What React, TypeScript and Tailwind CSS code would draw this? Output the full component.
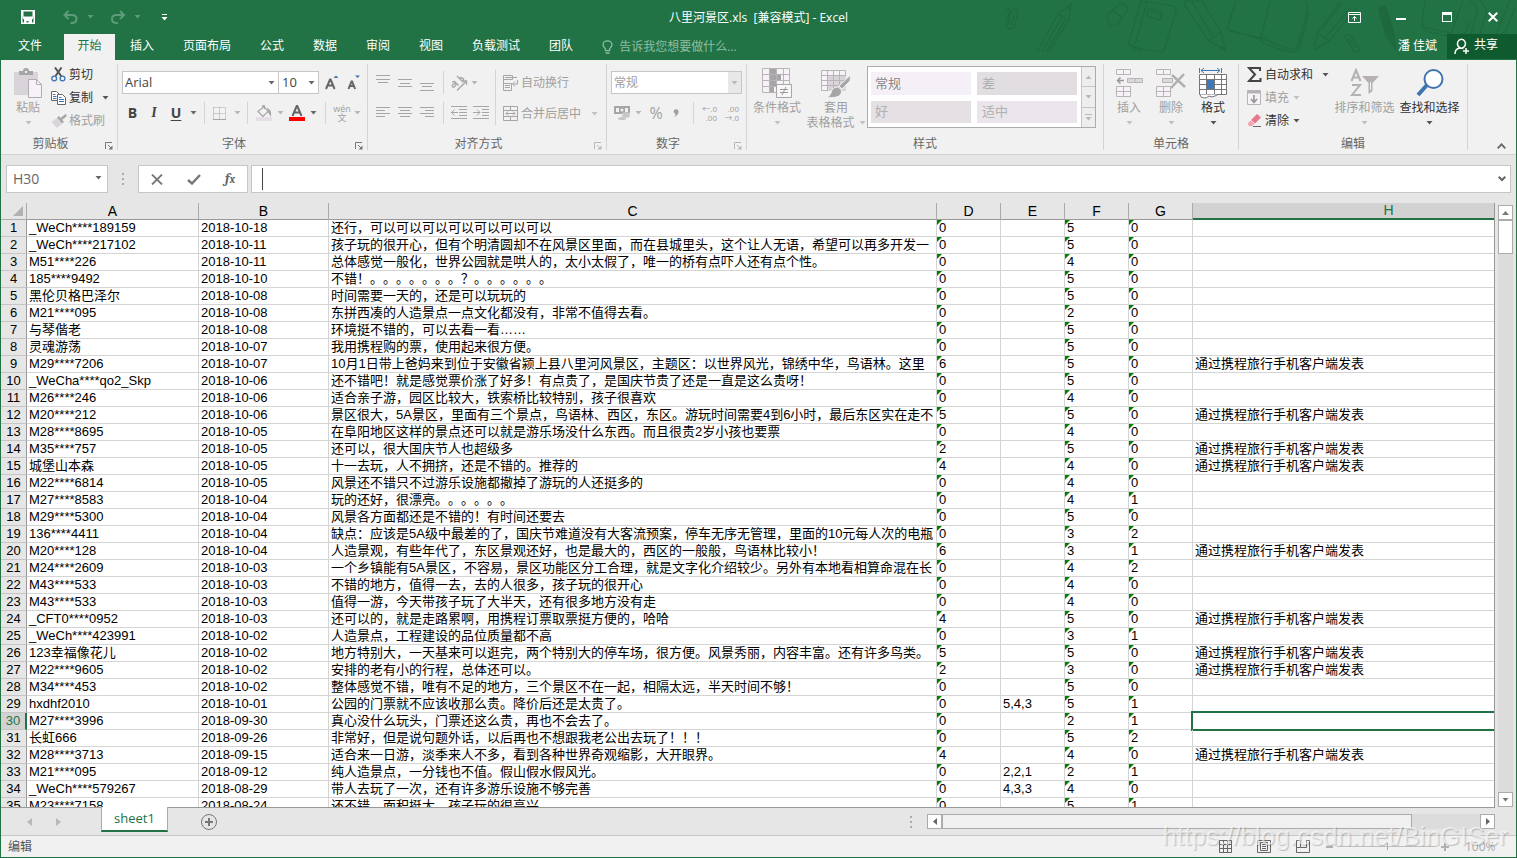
import type { ReactNode } from "react";
import clsx from "clsx";

const FROM_APP = "通过携程旅行手机客户端发表";

// user, date, comment, D, E, F, G, H
const rows: string[][] = [
  ["_WeCh****189159", "2018-10-18", "还行，可以可以可以可以可以可以可以", "0", "", "5", "0", ""],
  ["_WeCh****217102", "2018-10-11", "孩子玩的很开心，但有个明清圆却不在风景区里面，而在县城里头，这个让人无语，希望可以再多开发一", "0", "", "5", "0", ""],
  ["M51****226", "2018-10-11", "总体感觉一般化，世界公园就是哄人的，太小太假了，唯一的桥有点吓人还有点个性。", "0", "", "4", "0", ""],
  ["185****9492", "2018-10-10", "不错！。。。。。。。？。。。。。。", "0", "", "5", "0", ""],
  ["黑伦贝格巴泽尔", "2018-10-08", "时间需要一天的，还是可以玩玩的", "0", "", "5", "0", ""],
  ["M21****095", "2018-10-08", "东拼西凑的人造景点一点文化都没有，非常不值得去看。", "0", "", "2", "0", ""],
  ["与琴偕老", "2018-10-08", "环境挺不错的，可以去看一看……", "0", "", "5", "0", ""],
  ["灵魂游荡", "2018-10-07", "我用携程购的票，使用起来很方便。", "0", "", "5", "0", ""],
  ["M29****7206", "2018-10-07", "10月1日带上爸妈来到位于安徽省颍上县八里河风景区，主题区：以世界风光，锦绣中华，鸟语林。这里", "6", "", "5", "0", FROM_APP],
  ["_WeCha****qo2_Skp", "2018-10-06", "还不错吧！就是感觉票价涨了好多！有点贵了，是国庆节贵了还是一直是这么贵呀！", "0", "", "5", "0", ""],
  ["M26****246", "2018-10-06", "适合亲子游，园区比较大，铁索桥比较特别，孩子很喜欢", "0", "", "4", "0", ""],
  ["M20****212", "2018-10-06", "景区很大，5A景区，里面有三个景点，鸟语林、西区，东区。游玩时间需要4到6小时，最后东区实在走不", "5", "", "5", "0", FROM_APP],
  ["M28****8695", "2018-10-05", "在阜阳地区这样的景点还可以就是游乐场没什么东西。而且很贵2岁小孩也要票", "0", "", "4", "0", ""],
  ["M35****757", "2018-10-05", "还可以，很大国庆节人也超级多", "2", "", "5", "0", FROM_APP],
  ["城堡山本森", "2018-10-05", "十一去玩，人不拥挤，还是不错的。推荐的", "4", "", "4", "0", FROM_APP],
  ["M22****6814", "2018-10-05", "风景还不错只不过游乐设施都撤掉了游玩的人还挺多的", "0", "", "4", "0", ""],
  ["M27****8583", "2018-10-04", "玩的还好，很漂亮。。。。。。", "0", "", "4", "1", ""],
  ["M29****5300", "2018-10-04", "风景各方面都还是不错的！有时间还要去", "0", "", "5", "0", ""],
  ["136****4411", "2018-10-04", "缺点：应该是5A级中最差的了，国庆节难道没有大客流预案，停车无序无管理，里面的10元每人次的电瓶", "0", "", "3", "2", ""],
  ["M20****128", "2018-10-04", "人造景观，有些年代了，东区景观还好，也是最大的，西区的一般般，鸟语林比较小！", "6", "", "3", "1", FROM_APP],
  ["M24****2609", "2018-10-03", "一个乡镇能有5A景区，不容易，景区功能区分工合理，就是文字化介绍较少。另外有本地看相算命混在长", "0", "", "4", "2", ""],
  ["M43****533", "2018-10-03", "不错的地方，值得一去，去的人很多，孩子玩的很开心", "0", "", "4", "0", ""],
  ["M43****533", "2018-10-03", "值得一游，今天带孩子玩了大半天，还有很多地方没有走", "0", "", "4", "0", ""],
  ["_CFT0****0952", "2018-10-03", "还可以的，就是走路累啊，用携程订票取票挺方便的，哈哈", "4", "", "5", "0", FROM_APP],
  ["_WeCh****423991", "2018-10-02", "人造景点，工程建设的品位质量都不高", "0", "", "3", "1", ""],
  ["123幸福像花儿", "2018-10-02", "地方特别大，一天基来可以逛完，两个特别大的停车场，很方便。风景秀丽，内容丰富。还有许多鸟类。", "5", "", "5", "0", FROM_APP],
  ["M22****9605", "2018-10-02", "安排的老有小的行程，总体还可以。", "2", "", "3", "0", FROM_APP],
  ["M34****453", "2018-10-02", "整体感觉不错，唯有不足的地方，三个景区不在一起，相隔太远，半天时间不够！", "0", "", "5", "0", ""],
  ["hxdhf2010", "2018-10-01", "公园的门票就不应该收那么贵。降价后还是太贵了。", "0", "5,4,3", "5", "1", ""],
  ["M27****3996", "2018-09-30", "真心没什么玩头，门票还这么贵，再也不会去了。", "0", "", "2", "1", ""],
  ["长虹666", "2018-09-26", "非常好，但是说句题外话，以后再也不想跟我老公出去玩了！！！", "0", "", "5", "2", ""],
  ["M28****3713", "2018-09-15", "适合来一日游，淡季来人不多，看到各种世界奇观缩影，大开眼界。", "4", "", "4", "0", FROM_APP],
  ["M21****095", "2018-09-12", "纯人造景点，一分钱也不值。假山假水假风光。", "0", "2,2,1", "2", "1", ""],
  ["_WeCh****579267", "2018-08-29", "带人去玩了一次，还有许多游乐设施不够完善", "0", "4,3,3", "4", "0", ""],
  ["M23****7158", "2018-08-24", "还不错，面积挺大，孩子玩的很高兴", "0", "", "5", "1", ""],
];

const columns = ["A", "B", "C", "D", "E", "F", "G", "H"];
const menuTabs = ["插入", "页面布局", "公式", "数据", "审阅", "视图", "负载测试", "团队"];
const ACTIVE_ROW = 30;

function Caret({ className = "text-[#666]" }: { className?: string }) {
  return (
    <svg width="7" height="4" viewBox="0 0 7 4" className={clsx("shrink-0", className)} fill="currentColor">
      <path d="M0.5 0h6L3.5 3.5z" />
    </svg>
  );
}

function CaretButton({ label, className, dim }: { label: string; className?: string; dim?: boolean }) {
  return (
    <button aria-label={label} className={clsx("flex h-full items-center justify-center", className)}>
      <Caret className={dim ? "text-[#b8b8b8]" : "text-[#666]"} />
    </button>
  );
}

function Sep({ className }: { className?: string }) {
  return <span className={clsx("w-px shrink-0 bg-[#d4d4d4]", className)} />;
}

function Dots({ className }: { className?: string }) {
  return (
    <span className={clsx("flex flex-col items-center justify-center gap-[3px]", className)}>
      <i className="h-[2px] w-[2px] bg-[#aaa]" />
      <i className="h-[2px] w-[2px] bg-[#aaa]" />
      <i className="h-[2px] w-[2px] bg-[#aaa]" />
    </span>
  );
}

function Group({ title, className, launcher, dim, children }: {
  title: string; className: string; launcher?: boolean; dim?: boolean; children: ReactNode;
}) {
  return (
    <section className={clsx("flex shrink-0", className)}>
      <div className="flex min-w-0 flex-1 flex-col">
        <div className="flex h-[74px]">{children}</div>
        <div className="flex h-5 items-center text-[#666]">
          <span className="flex-1 text-center">{title}</span>
          {launcher && (
            <button aria-label={title + "设置"} className="flex w-[17px] justify-center pt-1">
              <svg width="8" height="8" viewBox="0 0 8 8" fill="none" stroke={dim ? "#b8b8b8" : "#777"}>
                <path d="M0.5 7V0.5H7M3 3l3.5 3.5" />
                <path d="M7.5 3.5v4h-4z" fill={dim ? "#b8b8b8" : "#777"} stroke="none" />
              </svg>
            </button>
          )}
        </div>
      </div>
      <Sep className="my-1" />
    </section>
  );
}

function BigButton({ label, icon, className, dim, caret = true }: {
  label: ReactNode; icon: ReactNode; className?: string; dim?: boolean; caret?: boolean;
}) {
  return (
    <button className={clsx("flex shrink-0 flex-col items-center pt-[7px]", dim ? "text-[#a0a0a0]" : "text-[#333]", className)}>
      <span className="flex h-8 items-center">{icon}</span>
      <span className="mt-px block leading-4 whitespace-nowrap">{label}</span>
      {caret && <Caret className={clsx("mt-[5px]", dim ? "text-[#c0c0c0]" : "text-[#555]")} />}
    </button>
  );
}

function SmallButton({ label, icon, dim, caret }: { label: string; icon: ReactNode; dim?: boolean; caret?: string }) {
  return (
    <button className={clsx("flex h-[23px] items-center whitespace-nowrap", dim ? "text-[#a0a0a0]" : "text-[#333]")}>
      <span className="flex w-[18px] shrink-0">{icon}</span>
      {label}
      {caret && (
        <span className={caret}>
          <Caret className={dim ? "text-[#c0c0c0]" : "text-[#555]"} />
        </span>
      )}
    </button>
  );
}

function Lines({ d }: { d: string }) {
  return (
    <svg width="16" height="16" viewBox="0 0 16 16" stroke="#a6a6a6" fill="none">
      <path d={d} />
    </svg>
  );
}

function Doodles() {
  return (
    <svg className="pointer-events-none absolute top-0 right-0" width="517" height="60" viewBox="0 0 517 60" fill="none" stroke="#1e693e" strokeWidth="1.2">
      <path d="M8 8l2 3-4 12c-1 5 5 8 8 4l4-14c0-4-6-5-7-1l-3 10c0 2 3 3 4 0l3-9M6 10l4-2M15 9l4 2" />
      <path d="M37 52L58 14l13-10-2 16-20 32M42 52l20-35M46 52l20-33M58 14l9 5M67 7l3 2" />
      <path d="M108 14l12-10q7-1 8 6l-11 15q-6 2-9-4zM112 10l11 8" />
      <path d="M141 1l-12 41q0 4 4 5l26 5q4 0 6-4L176 11q1-4-3-5zM147 2l-12 42M148 8l14 4-2 8-13-4zM150 11l9 3M133 45l1 7 4-3 3 3" />
      <path d="M185 1q-2 1 2 8l22 32 16 9-4-18L202 1zM192 2l22 36M209 41l12-9M221 46l4 3" />
      <path d="M236 1l-8 25q-1 5 5 6l28 6 28 11q6 2 9-4l9-33q1-8-2-11M270 1l-9 37M229 30l31 9q1 4 5 5l24 8q8 1 11-6l9-33" />
      <path d="M314 50l3-17L341 1M314 50l15-9 28-34M317 33l12 8M323 28l20-26M326 37l25-30" />
      <path d="M345 38q0-5 5-3l9 13q2 4-2 4-3 0-5-4l-5-8q0-3 3-1l6 9" />
      <path d="M379 9q3-5 7-1l8 25 2 17-10-14z" fill="#1e693e" />
      <path d="M425 1l-3 21q0 5 5 6l24 5 12-32M423 26q0 5 6 6l22 5M451 37l14-4 5-11M470 1q11 6 5 18l-4 15M480 1q10 8 4 19l-4 14M510 1l-14 33M515 8l-11 26" />
    </svg>
  );
}

function TitleBar() {
  return (
    <header className="relative bg-[#217346] text-white">
      <Doodles />
      <div className="relative flex h-[34px] items-center">
        <div className="flex flex-1 items-center">
          <button aria-label="保存" className="ml-[21px]">
            <svg width="14" height="14" viewBox="0 0 14 14" fill="none" stroke="#fff" strokeWidth="1.6">
              <path d="M0.8 0.8h12.4v12.400H0.8z" />
              <path d="M2 6.500h10V9H2zM3 9h8v4H7.500v-2H5.500v2H3zM1 1h1.500v6H1zM11.500 1H13v6h-1.500z" fill="#fff" stroke="none" />
            </svg>
          </button>
          <button aria-label="撤消" className="ml-7 flex items-center text-[#5f9a7a]">
            <svg width="16" height="14" viewBox="0 0 16 14" fill="none" stroke="currentColor" strokeWidth="2">
              <path d="M5.500 1L1.500 5l4 4M2 5h7q4.500 0 4.500 4T9 13H7.500" />
            </svg>
            <span className="ml-2"><Caret className="text-[#5f9a7a]" /></span>
          </button>
          <button aria-label="恢复" className="ml-4 flex items-center text-[#5f9a7a]">
            <svg width="16" height="14" viewBox="0 0 16 14" fill="none" stroke="currentColor" strokeWidth="2">
              <path d="M10 1l4 4-4 4M14 5H6.500Q2 5 2 9t4.500 4H8" />
            </svg>
            <span className="ml-2"><Caret className="text-[#5f9a7a]" /></span>
          </button>
          <button aria-label="自定义快速访问工具栏" className="ml-5 flex flex-col items-center gap-[2px]">
            <span className="h-px w-[5px] bg-white" />
            <Caret className="text-white" />
          </button>
        </div>
        <h1 className="pt-[2px] whitespace-pre">八里河景区.xls  [兼容模式] - Excel</h1>
        <div className="flex flex-1 items-center justify-end">
          <button aria-label="功能区显示选项">
            <svg width="13" height="11" viewBox="0 0 13 11" fill="none" stroke="#fff">
              <path d="M0.5 0.5h12v10h-12zM0.500 2.500h12M6.500 9V4.500M4.500 6.500l2-2 2 2" />
            </svg>
          </button>
          <button aria-label="最小化" className="ml-[35px] flex h-4 w-[10px] items-center">
            <span className="mt-1 h-[2px] w-full bg-white" />
          </button>
          <button aria-label="最大化" className="ml-9 h-[10px] w-[10px] border border-t-[3px] border-white" />
          <button aria-label="关闭" className="mr-[19px] ml-9">
            <svg width="10" height="10" viewBox="0 0 10 10" stroke="#fff" strokeWidth="2"><path d="M0.700 0.700l8.600 8.600M9.300 0.700L0.700 9.300" /></svg>
          </button>
        </div>
      </div>

      <div className="relative flex h-[26px]">
        <button className="w-16 pr-1 pb-[2px]">文件</button>
        <button className="w-[51px] bg-[#f1f1f1] pb-[2px] text-[#217346]">开始</button>
        <nav className="flex gap-[29px] pb-[2px] pl-[15px]">
          {menuTabs.map((tab) => <button key={tab}>{tab}</button>)}
        </nav>
        <label className="flex items-center gap-[6px] pl-[29px] text-[#8fbda3]">
          <svg width="11" height="14" viewBox="0 0 11 14" fill="none" stroke="currentColor" strokeWidth="1.300">
            <path d="M3.500 9.500C3.500 8 1 7 1 4.800a4.500 4 0 0 1 9 0C10 7 7.500 8 7.500 9.500v1.200h-4zM3.500 13h4" />
          </svg>
          <input aria-label="告诉我您想要做什么" placeholder="告诉我您想要做什么..." className="w-36 bg-transparent placeholder:text-[#8fbda3] focus:outline-none" />
        </label>
        <button className="mr-[10px] ml-auto pb-[2px]">潘 佳斌</button>
        <button className="flex h-[25px] w-[70px] items-center gap-1 bg-[#0f5b2f] pb-1 pl-[7px]">
          <svg width="16" height="17" viewBox="0 0 16 17" fill="none" stroke="#fff" strokeWidth="1.500" className="mt-1">
            <path d="M7.500 1.200a4 4.500 0 1 1-.1 0zM1 16q0-5 4.500-6l4 .5M12 10v6M9 13h6" />
          </svg>
          共享
        </button>
      </div>
    </header>
  );
}

function ClipboardGroup() {
  return (
    <Group title="剪贴板" className="w-[117px]" launcher>
      <BigButton
        dim
        className="ml-3 w-[30px]"
        label="粘贴"
        icon={
          <svg width="30" height="30" viewBox="0 0 30 30">
            <path d="M1 4h24v23H1z" fill="#d9d4d9" />
            <path d="M6 7V3h4q0-3 3-3t3 3h4v4z" fill="#a6a6a6" />
            <path d="M12 3h2v2h-2z" fill="#f1f1f1" />
            <path d="M15.500 11.500h8l5 5v13h-13z" fill="#f6f2f7" stroke="#b0acb0" />
            <path d="M23.500 11.500v5h5" fill="none" stroke="#b0acb0" />
          </svg>
        }
      />
      <div className="flex flex-col pt-[3px] pl-2">
        <SmallButton
          label="剪切"
          icon={
            <svg width="15" height="15" viewBox="0 0 15 15" fill="none">
              <path d="M4 0.500l6.500 9M10.500 0.500L4.500 9" stroke="#555" strokeWidth="2" />
              <circle cx="3.200" cy="11.500" r="2.400" stroke="#3f73b0" strokeWidth="1.300" />
              <circle cx="11.500" cy="11.500" r="2.400" stroke="#3f73b0" strokeWidth="1.300" />
            </svg>
          }
        />
        <SmallButton
          label="复制"
          caret="ml-[9px]"
          icon={
            <svg width="15" height="14" viewBox="0 0 15 14" fill="#fff" stroke="#666">
              <path d="M0.500 0.500h5l3 3v6h-8z" />
              <path d="M6.500 3.500h5l3 3v7h-8z" />
              <path d="M2 3.500h2.500M2 5.500h3.500M2 7.500h3.500M8 6.500h2.500M8 8.500h5M8 10.500h5" stroke="#3f73b0" />
            </svg>
          }
        />
        <SmallButton
          dim
          label="格式刷"
          icon={
            <svg width="16" height="14" viewBox="0 0 16 14">
              <path d="M0.500 8L6 4l5 6-5 4z" fill="#d9d4d9" />
              <path d="M6 3.500l2-1.500 5 6-2 1.500zM9.500 4l5-4L16 2l-5 4z" fill="#a6a6a6" />
            </svg>
          }
        />
      </div>
    </Group>
  );
}

function FontGroup() {
  return (
    <Group title="字体" className="w-[250px]" launcher>
      <div className="flex flex-col gap-2 pt-[11px] pl-1">
        <div className="flex h-[23px] items-center">
          <label className="relative h-full">
            <select aria-label="字体名称" className="h-full w-[157px] appearance-none border border-[#c6c6c6] bg-white pl-[2px] text-[13px] text-[#444]">
              <option>Arial</option>
            </select>
            <span className="pointer-events-none absolute top-[10px] right-1"><Caret /></span>
          </label>
          <label className="relative h-full">
            <select aria-label="字号" className="h-full w-10 appearance-none border border-l-0 border-[#c6c6c6] bg-white pl-[3px] text-[13px] text-[#444]">
              <option>10</option>
            </select>
            <span className="pointer-events-none absolute top-[10px] right-1"><Caret /></span>
          </label>
          <button aria-label="增大字号" className="ml-[6px]">
            <svg width="16" height="16" viewBox="0 0 16 16" fill="none" stroke="#666" strokeWidth="2">
              <path d="M1 14L5 4.500h.6L9.600 14M2.500 10.500h6" />
              <path d="M8.500 3h5L11 0.500z" fill="#3f73b0" stroke="none" />
            </svg>
          </button>
          <button aria-label="减小字号" className="ml-[6px]">
            <svg width="16" height="16" viewBox="0 0 16 16" fill="none" stroke="#666" strokeWidth="2">
              <path d="M1.500 14l3-7.500h.6l3 7.500M2.500 11h5" />
              <path d="M8 0.500h5L10.500 3z" fill="#3f73b0" stroke="none" />
            </svg>
          </button>
        </div>
        <div className="flex h-[22px] items-center text-sm text-[#444]">
          <button className="w-[21px] font-bold">B</button>
          <button className="w-[22px] font-serif font-bold italic">I</button>
          <button className="w-[22px] font-bold underline underline-offset-2">U</button>
          <CaretButton label="下划线" className="w-3" />
          <Sep className="mr-2 ml-[5px] h-full" />
          <button aria-label="边框">
            <svg width="14" height="13" viewBox="0 0 14 13" stroke="#a6a6a6" fill="#f6f2f7">
              <path d="M0.500 0.500h12v11M0.500 0.500v11M6.500 0.500v11M0.500 6.500h12" strokeDasharray="1 1" />
              <path d="M0 12.500h13" />
            </svg>
          </button>
          <CaretButton label="边框选项" className="w-5" dim />
          <Sep className="mr-2 h-full" />
          <button aria-label="填充颜色">
            <svg width="16" height="16" viewBox="0 0 16 16" fill="none" stroke="#a6a6a6" strokeWidth="1.200">
              <path d="M2 6.500l6-5 4 5-5 5zM6.500 4V1q1.500-1 2 0v3" />
              <path d="M12 4q3 2 2.500 6l-2-3z" fill="#a6a6a6" />
              <path d="M0 12h16v4H0z" fill="#e4dfe4" stroke="none" />
            </svg>
          </button>
          <CaretButton label="填充颜色选项" className="w-[17px]" dim />
          <button aria-label="字体颜色">
            <svg width="16" height="16" viewBox="0 0 16 16" fill="none">
              <path d="M3.500 11L7.700 1h.6l4.200 10M5 7.500h6" stroke="#666" strokeWidth="2" />
              <path d="M0 12h16v4H0z" fill="#f00" />
            </svg>
          </button>
          <CaretButton label="字体颜色选项" className="w-[17px]" />
          <Sep className="mr-[7px] ml-[3px] h-full" />
          <button className="flex w-[18px] flex-col items-center text-[9px] leading-[9px] text-[#a0a0a0]">
            <span>wén</span>
            <span>文</span>
          </button>
          <CaretButton label="拼音" className="w-[13px]" dim />
        </div>
      </div>
    </Group>
  );
}

function AlignGroup() {
  return (
    <Group title="对齐方式" className="w-[239px]" launcher dim>
      <div className="flex flex-col gap-2 pt-[11px] pl-[7px]">
        <div className="flex h-[23px] items-center">
          <div className="flex gap-[6px]">
            <button aria-label="顶端对齐"><Lines d="M1 4.500h14M3 7.500h10M1 0.500h14" /></button>
            <button aria-label="垂直居中"><Lines d="M1 4.500h14M3 8.500h10M1 11.500h14" /></button>
            <button aria-label="底端对齐"><Lines d="M1 8.500h14M3 11.500h10M1 15.500h14" /></button>
          </div>
          <Sep className="mr-[7px] ml-2 h-full" />
          <button aria-label="方向">
            <svg width="17" height="16" viewBox="0 0 17 16" fill="none" stroke="#a6a6a6" strokeWidth="1.300">
              <path d="M6 15.500L15 6.500M11.500 6H15.500v4" />
              <path d="M1.500 7.500q1.500-2 3 0l3 3M5.500 9q-2-1-3.500.5t0 2.500 3-2.500M6 1l6 6M8.500 3.500q2-1.500 3.500 0t-.5 3.500" />
            </svg>
          </button>
          <CaretButton label="方向选项" className="w-3" dim />
        </div>
        <div className="flex h-[22px] items-center">
          <div className="flex gap-[6px]">
            <button aria-label="左对齐"><Lines d="M1 2.500h14M1 5.500h9M1 8.500h14M1 11.500h9" /></button>
            <button aria-label="居中"><Lines d="M1 2.500h14M3 5.500h10M1 8.500h14M3 11.500h10" /></button>
            <button aria-label="右对齐"><Lines d="M1 2.500h14M6 5.500h9M1 8.500h14M6 11.500h9" /></button>
          </div>
          <Sep className="mr-[7px] ml-2 h-full" />
          <button aria-label="减少缩进量"><Lines d="M0 1.500h16M8 4.500h8M8 7.500h8M8 10.500h8M0 13.500h16M0 7.500h7M3.500 4.500l-3 3 3 3" /></button>
          <button aria-label="增加缩进量" className="ml-[6px]"><Lines d="M0 1.500h16M9 4.500h7M9 7.500h7M9 10.500h7M0 13.500h16M0 7.500h7M4 4.500l3 3-3 3" /></button>
        </div>
      </div>
      <Sep className="mt-[10px] ml-[6px] h-[55px]" />
      <div className="flex flex-col gap-2 pt-[11px] pl-[7px]">
        <SmallButton
          dim
          label="自动换行"
          icon={
            <svg width="16" height="16" viewBox="0 0 16 16" fill="none" stroke="#a6a6a6">
              <path d="M0.500 15.500V0.500h9v4h-9M0.500 8.500h8v7h-8M2 2.500h12M2 10.500h5M2 12.500h5M14.500 5v4H10M12 6.500l-2.500 2.500 2.500 2.500" />
            </svg>
          }
        />
        <SmallButton
          dim
          label="合并后居中"
          caret="ml-[10px]"
          icon={
            <svg width="15" height="15" viewBox="0 0 15 15" fill="none" stroke="#a6a6a6">
              <path d="M0.500 0.500h14v14h-14zM0.500 4.500h14M0.500 10.500h14M7.500 0.500v4M7.500 10.500v4M3 7.500h9M5 5.500l-2 2 2 2M10 5.500l2 2-2 2" />
            </svg>
          }
        />
      </div>
    </Group>
  );
}

function NumberGroup() {
  return (
    <Group title="数字" className="w-[140px]" launcher dim>
      <div className="flex flex-col gap-2 pt-[11px] pl-1">
        <label className="relative h-[23px]">
          <select aria-label="数字格式" className="h-full w-[131px] appearance-none border border-[#c6c6c6] bg-white pl-[2px] text-[#a0a0a0]">
            <option>常规</option>
          </select>
          <span className="pointer-events-none absolute top-px right-px flex h-[21px] w-[13px] items-center justify-center bg-[#e8e8e8]">
            <Caret className="text-[#b8b8b8]" />
          </span>
        </label>
        <div className="flex h-[22px] items-center text-[#a0a0a0]">
          <button aria-label="会计数字格式" className="ml-[3px]">
            <svg width="16" height="16" viewBox="0 0 16 16" fill="#c9c5c9">
              <path d="M0 1h16v8H0z" fill="#a6a6a6" />
              <path d="M2 3h3v4H2zM11 3h3v4h-3z" fill="#f1f1f1" />
              <circle cx="8" cy="5" r="1.500" fill="#f1f1f1" />
              <ellipse cx="12" cy="8.500" rx="4" ry="1.500" />
              <ellipse cx="12" cy="11" rx="4" ry="1.500" />
              <ellipse cx="8" cy="13.500" rx="4" ry="1.500" />
            </svg>
          </button>
          <CaretButton label="货币" className="w-[17px]" dim />
          <button className="w-[18px] text-base">%</button>
          <button aria-label="千位分隔样式" className="w-6 pl-2">
            <svg width="6" height="8" viewBox="0 0 6 8" fill="#a0a0a0"><path d="M1 1q4-2 4.500 1.500T1 8q2-2 1.500-3Q0 4 1 1z" /></svg>
          </button>
          <Sep className="mr-[7px] ml-1 h-full" />
          <button className="flex w-4 flex-col text-right text-[8px] leading-[9px]">
            <span>←.0</span>
            <span>.00</span>
          </button>
          <button className="ml-[6px] flex w-4 flex-col text-right text-[8px] leading-[9px]">
            <span>.00</span>
            <span>→.0</span>
          </button>
        </div>
      </div>
    </Group>
  );
}

function StylesGroup() {
  return (
    <Group title="样式" className="w-[357px]">
      <BigButton
        dim
        className="ml-[2px] w-14"
        label="条件格式"
        icon={
          <svg width="30" height="30" viewBox="0 0 30 30" fill="none" stroke="#b8b4b8">
            <path d="M0.500 0.500h27v24h-27z" fill="#f6f2f7" />
            <path d="M8 1h6v5H8zM8 7h11v5H8zM8 13h7v5H8zM8 19h4v5H8z" fill="#a6a6a6" stroke="none" />
            <path d="M0.500 6.500h27M0.500 12.500h27M0.500 18.500h27M7.500 0.500v24M14.500 0.500v24M21.500 0.500v24" />
            <path d="M14.500 16.500h15v13h-15z" fill="#f8f6f8" stroke="#a6a6a6" />
            <path d="M18 21.500h8M18 24.500h8M24 19l-4 8" stroke="#999" />
          </svg>
        }
      />
      <BigButton
        dim
        caret={false}
        className="w-[62px]"
        label={
          <>
            <span className="block leading-4">套用</span>
            <span className="flex items-center gap-1 leading-[14px]">表格格式<Caret className="text-[#c0c0c0]" /></span>
          </>
        }
        icon={
          <svg width="30" height="29" viewBox="0 0 30 29" fill="none" stroke="#b8b4b8">
            <path d="M0.500 1.500h24v20h-24z" fill="#f6f2f7" />
            <path d="M7 7h18v15H7z" fill="#d9d4d9" stroke="none" />
            <path d="M0.500 6.500h24M0.500 11.500h24M0.500 16.500h24M6.500 1.500v20M12.500 1.500v20M18.500 1.500v20" />
            <path d="M29.500 6L18 17l3 3 8-8z" fill="#a6a6a6" stroke="#f1f1f1" />
            <path d="M17 18q-6 0-7 6-1 3-4 4 10 2 14-3 2-4-3-7z" fill="#a6a6a6" stroke="#f1f1f1" />
          </svg>
        }
      />
      <div className="mt-[6px] flex h-[62px] border border-[#ababab] bg-white text-[13px] text-[#b0b0b0]">
        <div className="grid grid-cols-[100px_100px] gap-[6px] px-[3px] pt-[5px] pb-1">
          <button className="bg-[#f5f0f7] pl-1 text-left text-[#888]">常规</button>
          <button className="bg-[#e2dde1] pl-[5px] text-left">差</button>
          <button className="bg-[#e5e0e4] pl-1 text-left">好</button>
          <button className="bg-[#e9e5ea] pl-[5px] text-left">适中</button>
        </div>
        <div className="ml-px flex w-[14px] flex-col divide-y divide-[#c6c6c6] border-l border-[#c6c6c6] bg-[#eee]">
          <button aria-label="上一行" className="flex flex-1 items-center justify-center">
            <svg width="7" height="4" viewBox="0 0 7 4" fill="#b8b8b8"><path d="M0.500 4h6L3.500 0.500z" /></svg>
          </button>
          <button aria-label="下一行" className="flex flex-1 items-center justify-center"><Caret className="text-[#b8b8b8]" /></button>
          <button aria-label="其他样式" className="flex flex-1 flex-col items-center justify-center gap-[2px]">
            <span className="h-px w-[7px] bg-[#b8b8b8]" />
            <Caret className="text-[#b8b8b8]" />
          </button>
        </div>
      </div>
    </Group>
  );
}

function CellsGroup() {
  return (
    <Group title="单元格" className="w-[135px]">
      <BigButton
        dim
        className="ml-1 w-[42px]"
        label="插入"
        icon={
          <svg width="27" height="28" viewBox="0 0 27 28" fill="#f6f2f7" stroke="#b8b4b8">
            <path d="M0.500 0.500h14v5h-14zM7.500 0.500v5M0.500 17.500h14v10h-14zM7.500 17.500v10M0.500 22.500h14" />
            <path d="M11.500 9.500h15v4h-15zM19 9.500v4" fill="#ddd8dd" />
            <path d="M1.500 11.500H8M4.500 8.500l-3 3 3 3" fill="none" stroke="#999" strokeWidth="1.500" />
          </svg>
        }
      />
      <BigButton
        dim
        className="w-[42px]"
        label="删除"
        icon={
          <svg width="30" height="28" viewBox="0 0 30 28" fill="#f6f2f7" stroke="#b8b4b8">
            <path d="M0.500 0.500h14v5h-14zM7.500 0.500v5M0.500 17.500h14v10h-14zM7.500 17.500v10M0.500 22.500h14" />
            <path d="M6.500 9.500h10v4h-10z" fill="#ddd8dd" />
            <path d="M16 6l13 12M28 5L15 19" fill="none" stroke="#b0b0b0" strokeWidth="2.500" />
          </svg>
        }
      />
      <BigButton
        className="w-[42px]"
        label="格式"
        icon={
          <svg width="28" height="31" viewBox="0 0 28 31" fill="none" stroke="#777">
            <path d="M0.500 6.500h27v20h-27z" fill="#fff" />
            <path d="M0.500 11.500h27M0.500 21.500h27M7.500 6.500v20M15.500 6.500v20M22.500 6.500v20M0.500 16.500H7M16 16.500h12" />
            <path d="M8 12h7v9H8z" fill="#3f78b8" stroke="none" />
            <path d="M0.500 0v5M22.500 0v5M2 2.500h19M5 0L2 2.500 5 5M18 0l3 2.500L18 5" stroke="#3f78b8" />
            <path d="M1 26.500q0 3 4 3.500 3 0 5-2 3 2 6 0l3-1.500" fill="#fff" />
          </svg>
        }
      />
    </Group>
  );
}

function EditGroup() {
  return (
    <Group title="编辑" className="w-[229px]">
      <div className="flex w-[93px] flex-col pt-[3px] pl-2">
        <SmallButton
          label="自动求和"
          caret="ml-[9px]"
          icon={
            <svg width="15" height="15" viewBox="0 0 15 15" fill="none" stroke="#444" strokeWidth="2">
              <path d="M13 4V1H2l6 6.500L2 14h11.500v-3" />
            </svg>
          }
        />
        <SmallButton
          dim
          label="填充"
          caret="ml-1"
          icon={
            <svg width="14" height="15" viewBox="0 0 14 15" fill="none" stroke="#b8b4b8">
              <path d="M0.500 0.500h13v14h-13z" fill="#f6f2f7" />
              <path d="M1 1h12v2H1z" fill="#b0b0b0" />
              <path d="M7 5v7M4 9l3 3.500L10 9" stroke="#999" strokeWidth="1.700" />
            </svg>
          }
        />
        <SmallButton
          label="清除"
          caret="ml-1"
          icon={
            <svg width="15" height="13" viewBox="0 0 15 13">
              <path d="M4 6l6-6 4 3.500-6 6z" fill="#e8788c" />
              <path d="M3.500 6.500l4 3.500L5 12H2L0.500 9.500z" fill="#f3a5b2" />
              <path d="M6 12.500h8" stroke="#666" />
            </svg>
          }
        />
      </div>
      <BigButton
        dim
        className="w-[65px]"
        label="排序和筛选"
        icon={
          <svg width="30" height="30" viewBox="0 0 30 30" fill="none" stroke="#b4b0b4" strokeWidth="2">
            <path d="M1.500 13L6 2l4.500 11M3 9.500h6M2 17h8L2 27h9" />
            <path d="M12 8h17l-6.500 7v8l-4 3V15z" fill="#b4b0b4" stroke="none" />
            <path d="M20.500 14v8" stroke="#f1f1f1" strokeWidth="1" />
          </svg>
        }
      />
      <BigButton
        className="w-[65px]"
        label="查找和选择"
        icon={
          <svg width="28" height="28" viewBox="0 0 28 28" fill="none" stroke="#3f73b0">
            <path d="M11 16L2 26" strokeWidth="4" />
            <circle cx="17.500" cy="10" r="9" strokeWidth="2" fill="#fff" />
          </svg>
        }
      />
    </Group>
  );
}

function FormulaBar() {
  return (
    <div className="flex h-12 shrink-0 bg-[#e6e6e6] px-[5px] pt-[10px] text-[#666]">
      <label className="flex h-7 w-[102px] items-center border border-[#c6c6c6] bg-white pr-[5px]">
        <input aria-label="名称框" defaultValue="H30" className="w-full min-w-0 bg-transparent pl-[6px] text-sm focus:outline-none" />
        <Caret className="mb-[2px]" />
      </label>
      <Dots className="h-7 w-[30px]" />
      <div className="flex h-7 w-[110px] items-center justify-around border border-[#c6c6c6] bg-white">
        <button aria-label="取消">
          <svg width="12" height="11" viewBox="0 0 12 11" stroke="#777" strokeWidth="1.800"><path d="M1 0.500l10 10M11 0.500L1 10.500" /></svg>
        </button>
        <button aria-label="输入">
          <svg width="14" height="11" viewBox="0 0 14 11" stroke="#777" strokeWidth="2.400" fill="none"><path d="M1 6l4 3.500L13 1" /></svg>
        </button>
        <button className="font-serif text-sm font-bold italic">f<span className="text-[11px]">x</span></button>
      </div>
      <div className="ml-[3px] flex h-7 flex-1 items-center border border-[#c6c6c6] bg-white pr-1 pl-[10px]">
        <span className="h-[22px] w-px bg-[#444]" />
        <input aria-label="编辑栏" className="h-full flex-1 bg-transparent focus:outline-none" />
        <svg width="8" height="6" viewBox="0 0 8 6" fill="none" stroke="#666" strokeWidth="2"><path d="M0.700 0.700L4 4l3.300-3.300" /></svg>
      </div>
    </div>
  );
}

function Sheet() {
  return (
    <div className="min-w-0 flex-1 overflow-hidden border-r border-[#999]">
      {/* the last column runs on past the right edge of the view */}
      <table className="w-[calc(100%+90px)] table-fixed border-separate border-spacing-0 bg-white font-['Liberation_Sans','Noto_Sans_CJK_SC',sans-serif] text-[13px] leading-4 text-black [text-spacing-trim:space-all]">
        <colgroup>
          <col className="w-[26px]" />
          <col className="w-[172px]" />
          <col className="w-[130px]" />
          <col className="w-[608px]" />
          <col className="w-[64px]" />
          <col className="w-[64px]" />
          <col className="w-[64px]" />
          <col className="w-[64px]" />
          <col />
        </colgroup>
        <thead>
          <tr className="h-[17px] bg-[#e6e6e6] text-sm leading-4">
            <th aria-label="全选" className="border-r border-b border-[#ababab] p-0">
              <svg width="10" height="10" viewBox="0 0 10 10" className="ml-3"><path d="M10 0v10H0z" fill="#b1b1b1" /></svg>
            </th>
            {columns.map((c) => (
              <th
                key={c}
                scope="col"
                className={clsx(
                  "p-0 font-normal",
                  c === "H" ? "border-b-2 border-[#217346] bg-[#d2d2d2] leading-[15px] text-[#217346]" : "border-r border-b border-r-[#ababab] border-b-[#999]",
                )}
              >
                {c}
              </th>
            ))}
          </tr>
        </thead>
        <tbody>
          {rows.map((row, i) => {
            const active = i + 1 === ACTIVE_ROW;
            return (
              <tr key={i} className="h-[17px]">
                <th
                  scope="row"
                  className={clsx(
                    "border-b border-b-[#c6c6c6] p-0 text-center font-normal",
                    active ? "border-r-2 border-r-[#217346] bg-[#d2d2d2] text-[#217346]" : "border-r border-r-[#999] bg-[#e6e6e6]",
                  )}
                >
                  {i + 1}
                </th>
                {row.map((value, c) => (
                  <td
                    key={columns[c]}
                    className={clsx(
                      "relative border-r border-b border-[#d4d4d4] py-0 pr-0 pl-[2px] whitespace-nowrap",
                      !(active && c === 7) && "overflow-hidden",
                    )}
                  >
                    {value}
                    {(c === 3 || c === 5 || c === 6) && (
                      <svg width="5" height="5" viewBox="0 0 5 5" className="absolute top-0 left-0"><path d="M0 0h5L0 5z" fill="#008000" /></svg>
                    )}
                    {active && c === 7 && <span className="absolute -top-[2px] right-0 -bottom-[2px] -left-[2px] border-2 border-[#217346]" />}
                  </td>
                ))}
              </tr>
            );
          })}
        </tbody>
      </table>
    </div>
  );
}

function VerticalScroll() {
  return (
    <div className="flex w-[21px] shrink-0 flex-col pt-[2px] pr-[3px] pl-[3px]">
      <button aria-label="向上滚动" className="flex h-[15px] items-center justify-center border border-[#ababab] bg-white">
        <svg width="7" height="4" viewBox="0 0 7 4" fill="#777"><path d="M0 4h7L3.500 0z" /></svg>
      </button>
      <div className="flex-1 bg-[#dcdcdc]">
        <div className="h-[34px] border border-[#ababab] bg-white" />
      </div>
      <button aria-label="向下滚动" className="flex h-[15px] items-center justify-center border border-[#ababab] bg-white">
        <Caret className="text-[#777]" />
      </button>
    </div>
  );
}

function SheetTabs() {
  return (
    <div className="flex h-7 shrink-0 bg-[#e6e6e6]">
      <div className="flex flex-1 border-t border-[#999]">
        <div className="flex w-[100px] items-center gap-6 pl-[26px] text-[#b8b8b8]">
          <button aria-label="上一个工作表"><svg width="5" height="8" viewBox="0 0 5 8" fill="currentColor"><path d="M5 0v8L0 4z" /></svg></button>
          <button aria-label="下一个工作表"><svg width="5" height="8" viewBox="0 0 5 8" fill="currentColor"><path d="M0 0v8l5-4z" /></svg></button>
        </div>
        <button className="-mt-px h-[25px] w-[67px] border-x border-b-2 border-x-[#ababab] border-b-[#217346] bg-white text-[13px] text-[#217346]">sheet1</button>
        <button aria-label="新工作表" className="ml-8">
          <svg width="18" height="18" viewBox="0 0 18 18" fill="none" stroke="#777"><circle cx="9" cy="9" r="7.500" /><path d="M9 5v8M5 9h8" strokeWidth="2" /></svg>
        </button>
        <Dots className="ml-auto w-8" />
        <div className="mt-[6px] flex h-[15px] w-[568px] bg-[#dcdcdc]">
          <button aria-label="向左滚动" className="flex w-[15px] items-center justify-center border border-[#ababab] bg-white">
            <svg width="4" height="7" viewBox="0 0 4 7" fill="#666"><path d="M4 0v7L0 3.500z" /></svg>
          </button>
          <div className="flex-1">
            <div className="h-full w-[470px] border border-[#ababab] bg-[#f0f0f0]" />
          </div>
          <button aria-label="向右滚动" className="flex w-[15px] items-center justify-center border border-[#ababab] bg-white">
            <svg width="4" height="7" viewBox="0 0 4 7" fill="#666"><path d="M0 0v7l4-3.500z" /></svg>
          </button>
        </div>
      </div>
      <span className="w-[21px]" />
    </div>
  );
}

function StatusBar() {
  return (
    <footer className="flex h-[22px] shrink-0 items-center border-t border-[#c6c6c6] bg-[#f1f1f1] pr-5 pl-[7px] text-[#555]">
      <span className="flex-1">编辑</span>
      <div className="flex gap-[25px]">
        <button aria-label="普通">
          <svg width="13" height="13" viewBox="0 0 13 13" fill="none" stroke="#666"><path d="M0.500 0.500h12v12h-12zM4.500 0.500v12M8.500 0.500v12M0.500 4.500h12M0.500 8.500h12" /></svg>
        </button>
        <button aria-label="页面布局视图">
          <svg width="14" height="13" viewBox="0 0 14 13" fill="none" stroke="#666"><path d="M0.500 0.500h13v12h-13zM3.500 2.500h7v8h-7zM5 4.500h4M5 6.500h4M5 8.500h4" /></svg>
        </button>
        <button aria-label="分页预览">
          <svg width="14" height="13" viewBox="0 0 14 13" fill="none" stroke="#666"><path d="M4.500 0.500h-4v12h13v-12h-3M4.500 0.500v7h6v-7M0.500 7.500h4" /></svg>
        </button>
      </div>
      <button aria-label="缩小" className="ml-4 h-[2px] w-[7px] bg-[#b0b0b0]" />
      <input type="range" aria-label="缩放" className="mx-1 h-[7px] w-[100px] appearance-none bg-[linear-gradient(#c0c0c0,#c0c0c0)] bg-[length:100%_1px] bg-center bg-no-repeat [&::-webkit-slider-thumb]:h-[7px] [&::-webkit-slider-thumb]:w-px [&::-webkit-slider-thumb]:appearance-none [&::-webkit-slider-thumb]:bg-[#aaa]" />
      <button aria-label="放大">
        <svg width="8" height="8" viewBox="0 0 8 8" stroke="#b0b0b0" strokeWidth="2"><path d="M4 0v8M0 4h8" /></svg>
      </button>
      <span className="ml-4 w-[31px] text-[#aaa]">100%</span>
    </footer>
  );
}

export default function App() {
  return (
    <div className="relative flex h-screen flex-col overflow-hidden bg-[#e6e6e6] font-['Open_Sans','Noto_Sans_CJK_SC',sans-serif] text-xs">
      <TitleBar />
      <div className="flex min-h-0 flex-1 flex-col border-x border-b border-[#217346]">
        <div className="flex h-[95px] shrink-0 border-b border-[#d2d2d2] bg-[#f1f1f1]">
          <ClipboardGroup />
          <FontGroup />
          <AlignGroup />
          <NumberGroup />
          <StylesGroup />
          <CellsGroup />
          <EditGroup />
          <button aria-label="折叠功能区" className="mt-auto mr-[10px] mb-[5px] ml-auto">
            <svg width="9" height="6" viewBox="0 0 9 6" fill="none" stroke="#666" strokeWidth="1.800"><path d="M0.700 5.300l3.800-4 3.800 4" /></svg>
          </button>
        </div>
        <FormulaBar />
        <div className="flex min-h-0 flex-1">
          <Sheet />
          <VerticalScroll />
        </div>
        <SheetTabs />
        <StatusBar />
      </div>
      <span className="pointer-events-none absolute right-[9px] bottom-1 font-['Liberation_Sans',sans-serif] text-[26px] text-white/60 [text-shadow:1px_1px_1px_rgba(0,0,0,0.2)]">
        https://blog.csdn.net/BinGISer
      </span>
    </div>
  );
}
